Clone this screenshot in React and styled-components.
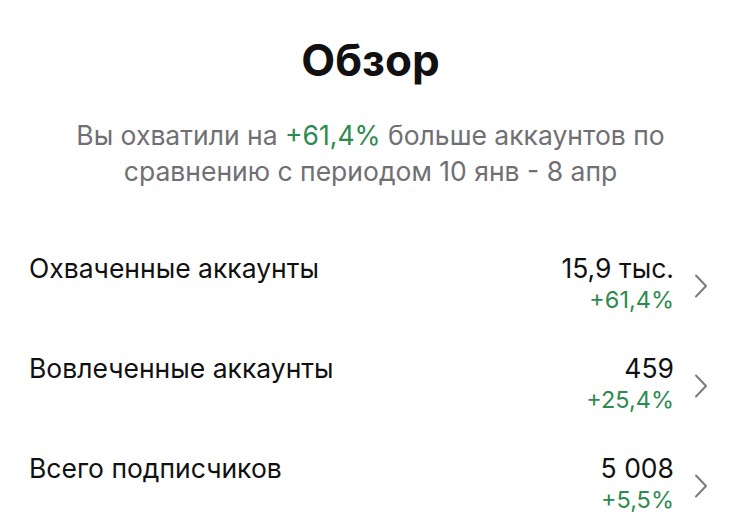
import React from 'react';
import styled, { createGlobalStyle } from 'styled-components';

const GlobalStyle = createGlobalStyle`
  html, body {
    margin: 0;
    padding: 0;
    background: #ffffff;
  }
  body {
    font-family: Inter, "Noto Sans", sans-serif;
    -webkit-font-smoothing: antialiased;
  }
`;

const stats = [
  { label: 'Охваченные аккаунты', value: '15,9 тыс.', delta: '+61,4%' },
  { label: 'Вовлеченные аккаунты', value: '459', delta: '+25,4%' },
  { label: 'Всего подписчиков', value: '5 008', delta: '+5,5%' },
];

const App = () => {
  return (
    <Page>
      <GlobalStyle />
      <Title>Обзор</Title>
      <Summary>
        Вы охватили на <Green>+61,4%</Green> больше аккаунтов по сравнению с периодом 10 янв - 8 апр
      </Summary>
      <List>
        {stats.map((s) => (
          <Row key={s.label}>
            <Label>{s.label}</Label>
            <RightSide>
              <Values>
                <Value>{s.value}</Value>
                <Delta>{s.delta}</Delta>
              </Values>
              <Chevron viewBox="0 0 14 24" width="14" height="24">
                <path d="M2 1.5 L12 12 L2 22.5" fill="none" stroke="#7c7c80" strokeWidth="2" strokeLinecap="round" strokeLinejoin="round" />
              </Chevron>
            </RightSide>
          </Row>
        ))}
      </List>
    </Page>
  );
};

const Page = styled.div`
  width: 741px;
  height: 528px;
  overflow: hidden;
  display: flex;
  flex-direction: column;
  align-items: center;
  box-sizing: border-box;
  padding-top: 28px;
`;

const Title = styled.h1`
  margin: 0;
  font-size: 44px;
  line-height: 64px;
  font-weight: 700;
  color: #111111;
`;

const Summary = styled.p`
  margin: 25px 0 0;
  width: 640px;
  text-align: center;
  font-size: 26.5px;
  line-height: 36px;
  color: #707074;
`;

const Green = styled.span`
  color: #2e8b4f;
`;

const List = styled.div`
  align-self: stretch;
  display: flex;
  flex-direction: column;
  gap: 28px;
  margin-top: 63px;
  padding: 0 33px 0 29px;
`;

const Row = styled.div`
  display: flex;
  justify-content: space-between;
  align-items: flex-start;
  height: 72px;
`;

const Label = styled.div`
  font-size: 26.5px;
  line-height: 32px;
  color: #111111;
`;

const RightSide = styled.div`
  display: flex;
  align-items: center;
  gap: 20px;
`;

const Values = styled.div`
  display: flex;
  flex-direction: column;
  align-items: flex-end;
`;

const Value = styled.div`
  font-size: 26.5px;
  line-height: 32px;
  color: #111111;
`;

const Delta = styled.div`
  margin-top: 2px;
  font-size: 23.5px;
  line-height: 28px;
  color: #2e8b4f;
`;

const Chevron = styled.svg`
  display: block;
  margin-top: 6px;
`;

export default App;
